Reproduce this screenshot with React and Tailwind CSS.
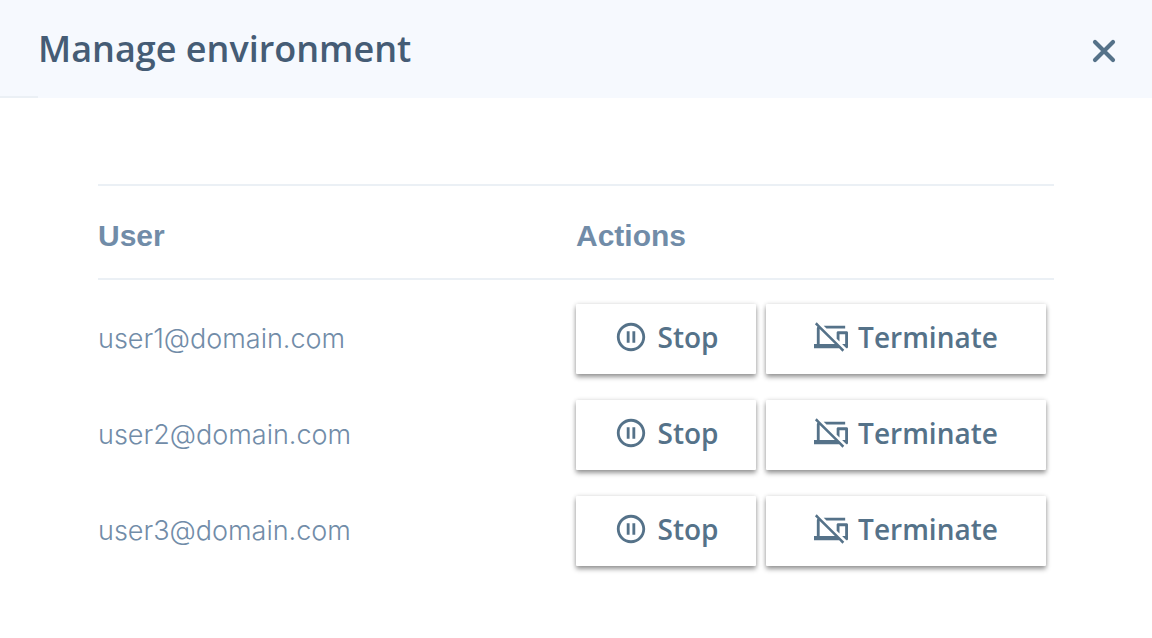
const users = ['user1@domain.com', 'user2@domain.com', 'user3@domain.com'];

function CloseIcon() {
  return (
    <svg className="size-6" viewBox="0 0 24 24" fill="none" stroke="currentColor" strokeWidth="4.2" strokeLinecap="round" aria-hidden="true">
      <path d="M3 3L21 21M21 3L3 21" />
    </svg>
  );
}

function PauseIcon() {
  return (
    <svg className="size-[34px] shrink-0" viewBox="0 0 24 24" fill="currentColor" aria-hidden="true">
      <path d="M9 16h2V8H9v8zm3-14C6.480 2 2 6.480 2 12s4.480 10 10 10 10-4.480 10-10S17.520 2 12 2zm0 18c-4.410 0-8-3.590-8-8s3.590-8 8-8 8 3.590 8 8-3.590 8-8 8zm1-4h2V8h-2v8z" />
    </svg>
  );
}

function DevicesOffIcon() {
  return (
    <svg className="size-[34px] shrink-0" viewBox="0 0 24 24" fill="currentColor" aria-hidden="true">
      <path d="M22 6V4H6.820l2 2H22zM1.920 1.650L.650 2.920l1.820 1.820C2.180 5.080 2 5.520 2 6v11H0v3h17.730l2.350 2.350 1.270-1.270L3.890 3.620 1.920 1.650zM4 6.270L14.730 17H4V6.270zM23 8h-6c-.550 0-1 .450-1 1v4.180l2 2V10h4v7h-2.180l3 3H23c.550 0 1-.450 1-1V9c0-.550-.450-1-1-1z" />
    </svg>
  );
}

function ActionButton({ icon, label, className }) {
  return (
    <button
      type="button"
      className={`flex h-[70px] items-center justify-center gap-[10px] rounded-[1px] bg-white pb-1 font-['Open_Sans',sans-serif] text-[28px] leading-9 font-semibold text-[#557289] shadow-[0_3px_5px_rgba(0,0,0,0.4),0_0_5px_rgba(0,0,0,0.1)] ${className}`}
    >
      {icon}
      {label}
    </button>
  );
}

export default function App() {
  return (
    <main className="min-h-screen bg-white">
      <header className="bg-[#f6f9fe]">
        <div className="flex h-24 items-center justify-between pt-[2px] pr-9 pl-[38px]">
          <h1 className="font-['Open_Sans',sans-serif] text-4xl leading-[48px] font-semibold text-[#455c75]">
            Manage environment
          </h1>
          <button type="button" aria-label="Close" className="pt-1 text-[#557289]">
            <CloseIcon />
          </button>
        </div>
        <div className="h-[2px] w-[38px] bg-[#ebf0f5]" />
      </header>
      <section className="px-[98px] pt-[86px] pb-14">
        <table className="w-full table-fixed border-collapse text-left text-[#718ca8]">
          <thead>
            <tr className="h-[94px] border-y-2 border-[#ebf0f5] font-['Liberation_Sans',Arial,sans-serif] text-[30px] leading-9">
              <th scope="col" className="w-1/2 p-0 pt-2 font-bold">User</th>
              <th scope="col" className="w-1/2 p-0 pt-2 font-bold">Actions</th>
            </tr>
          </thead>
          <tbody>
            <tr aria-hidden="true" className="h-3"><td colSpan={2} className="p-0" /></tr>
            {users.map((user) => (
              <tr key={user} className="h-24">
                <td className="p-0 font-['Inter',sans-serif] text-[27px] leading-9 font-light">{user}</td>
                <td className="p-0">
                  <div className="flex gap-[10px]">
                    <ActionButton icon={<PauseIcon />} label="Stop" className="w-[180px]" />
                    <ActionButton icon={<DevicesOffIcon />} label="Terminate" className="w-[280px]" />
                  </div>
                </td>
              </tr>
            ))}
          </tbody>
        </table>
      </section>
    </main>
  );
}
